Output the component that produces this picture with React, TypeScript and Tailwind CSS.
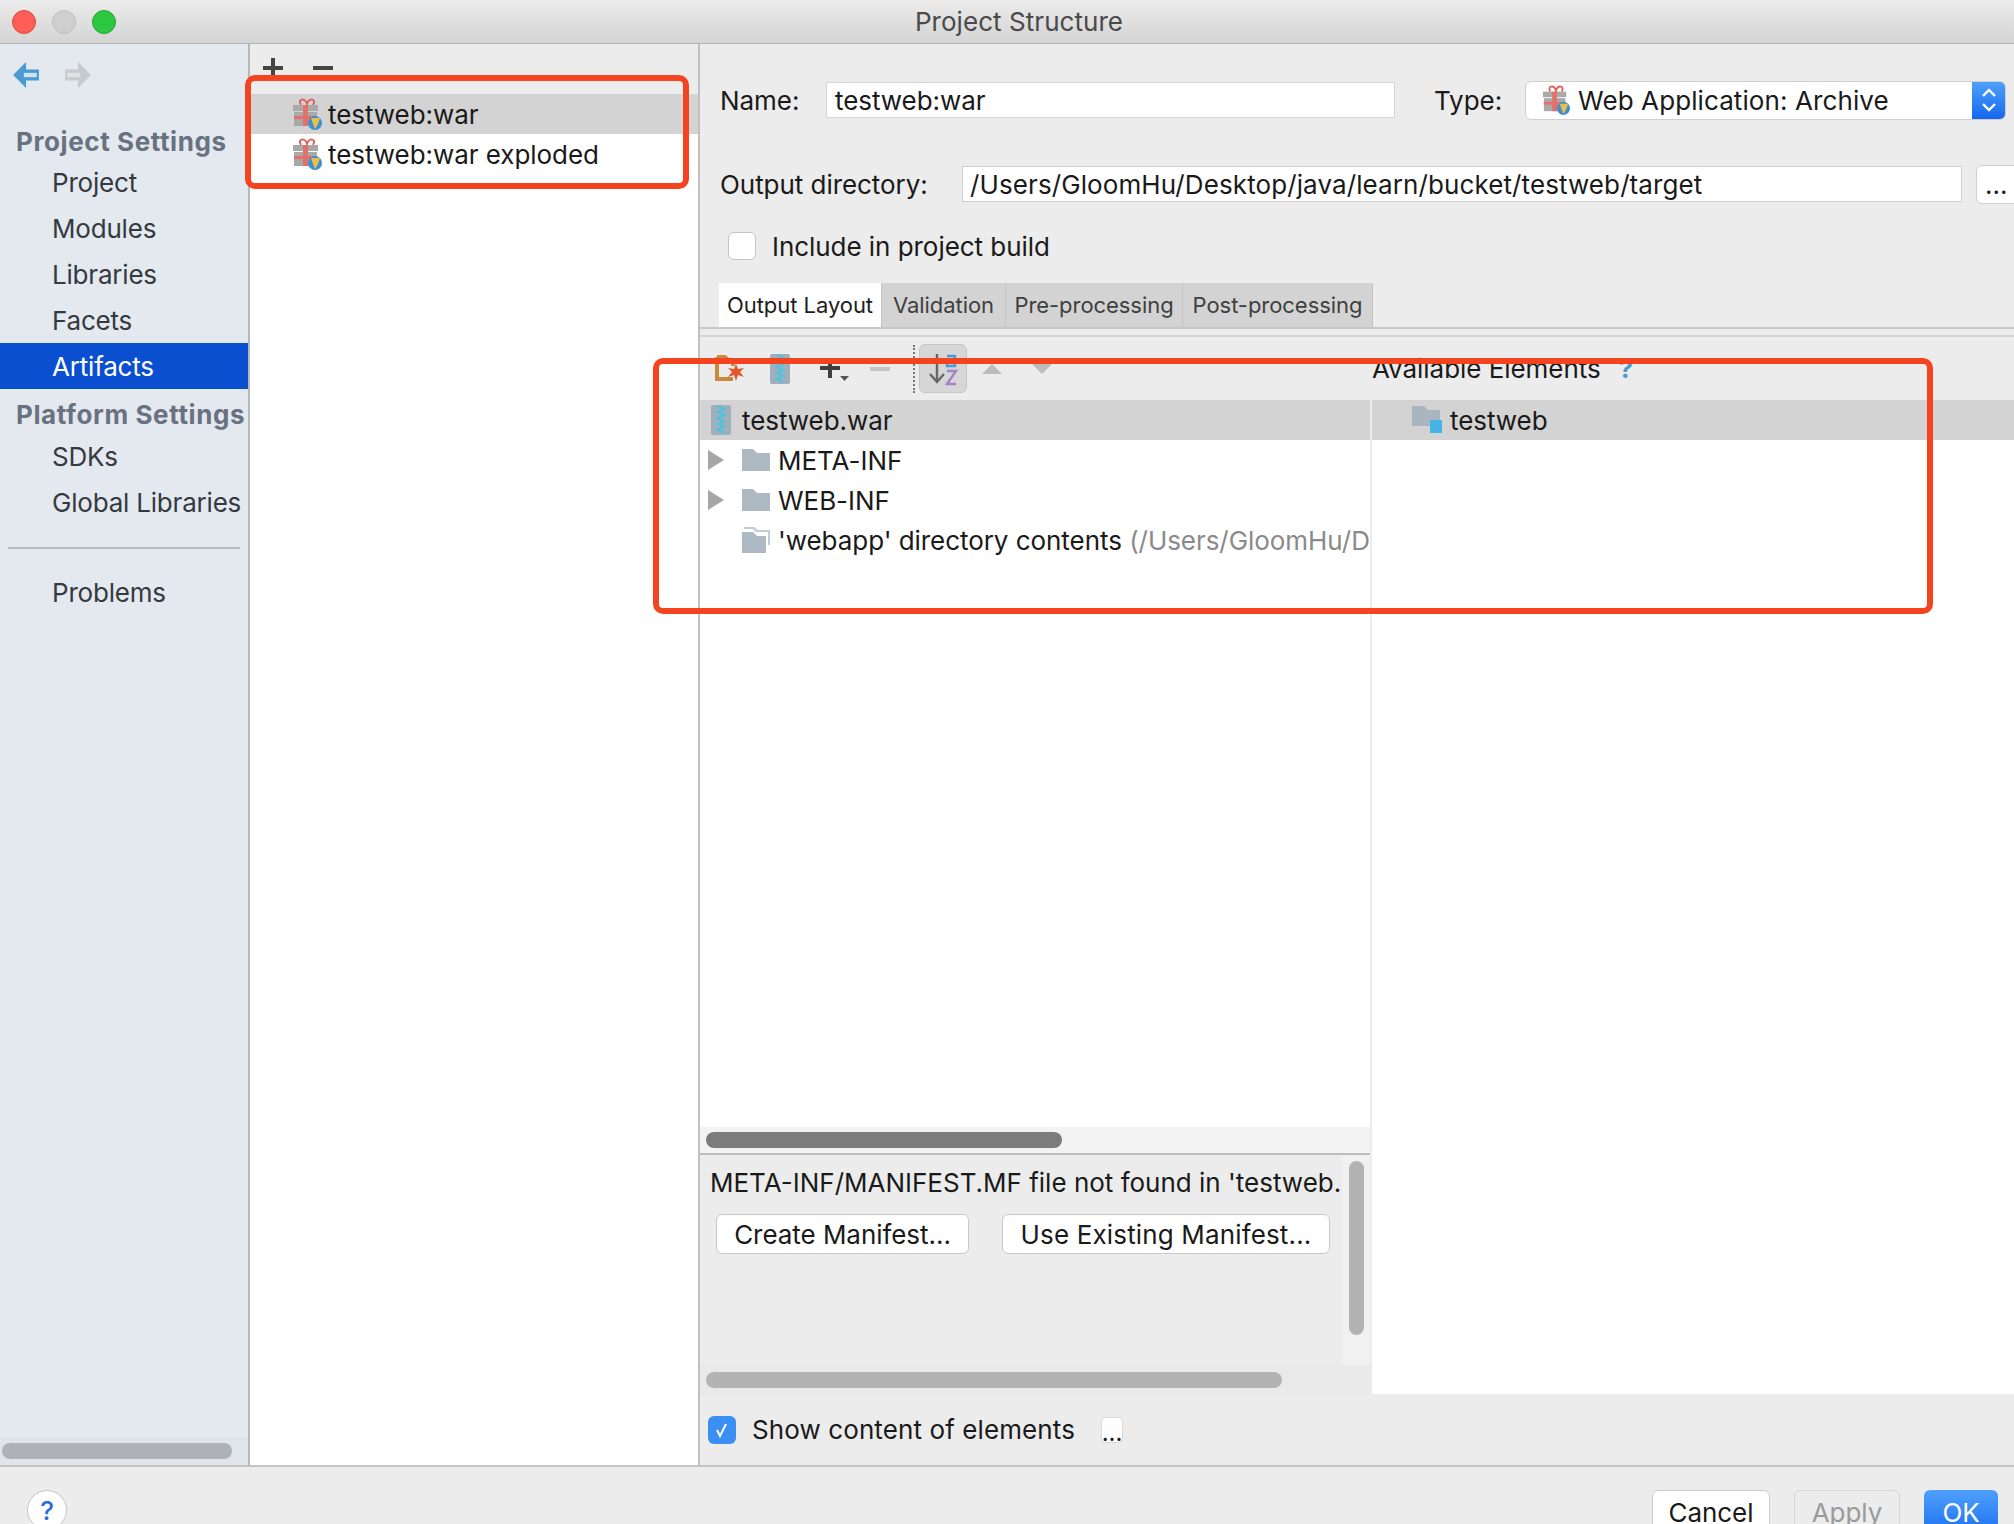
import React from "react";

const Gift = ({ className = "" }: { className?: string }) => (
  <svg viewBox="0 0 30 32" className={className}>
    <path d="M9 7c-4-6 4-8 6-1 2-7 10-5 6 1" fill="none" stroke="#e0625c" strokeWidth="2" />
    <rect x="1" y="7" width="25" height="6" fill="#a9a9a9" />
    <rect x="2" y="14" width="23" height="14" fill="#a9a9a9" />
    <rect x="11" y="7" width="5" height="21" fill="#e4706a" />
    <rect x="2" y="18" width="23" height="3" fill="#e4706a" />
    <circle cx="23" cy="25" r="7" fill="#3d8fd1" />
    <path d="M19 20h9l-2 6-3 5-2-5z" fill="#e8c048" />
  </svg>
);

const Zip = ({ className = "" }: { className?: string }) => (
  <svg viewBox="0 0 20 30" className={className}>
    <rect x="0" y="0" width="20" height="30" rx="2" fill="#9fb0bc" />
    <path d="M7 1l6 3-6 3 6 3-6 3 6 3-6 3 6 3-6 3 6 3" fill="none" stroke="#4fc3dc" strokeWidth="2.4" />
  </svg>
);

const Folder = ({ className = "" }: { className?: string }) => (
  <svg viewBox="0 0 28 22" className={className}>
    <path d="M0 0h11l4 4h13v18H0z" fill="#aebac3" />
  </svg>
);

const ContentFolder = ({ className = "" }: { className?: string }) => (
  <svg viewBox="0 0 28 26" className={className}>
    <path d="M2 0h10l4 3h12v15h-2V5H14l-3-3H2z" fill="#c3ccd3" />
    <path d="M0 5h11l4 4h9v17H0z" fill="#aebac3" />
  </svg>
);

const Arrow = () => (
  <svg viewBox="0 0 16 20" className="w-4 h-5 ml-2 shrink-0">
    <path d="M0 0l16 10L0 20z" fill="#a6a6a6" />
  </svg>
);

const Row = ({ children, cls = "" }: { children: React.ReactNode; cls?: string }) => (
  <div className={`flex items-center h-10 whitespace-nowrap overflow-hidden ${cls}`}>{children}</div>
);

const NavItem = ({ label, active = false }: { label: string; active?: boolean }) => (
  <div className={`h-[46px] pl-[52px] flex items-center whitespace-nowrap ${active ? "bg-[#0a4fd0] text-white" : "text-[#343a40]"}`}>{label}</div>
);

const Tab = ({ label, w, active = false }: { label: string; w: string; active?: boolean }) => (
  <div className={`${w} flex items-center justify-center text-[22px] tracking-[-0.05px] border-r border-[#c4c4c4] ${active ? "bg-white text-[#1d1d1d]" : "bg-[#d3d3d3] text-[#3f3f3f]"}`}>{label}</div>
);

const FootBtn = ({ label, cls }: { label: string; cls: string }) => (
  <div className={`h-[44px] flex items-center justify-center rounded-t-[6px] ${cls}`}>{label}</div>
);

export default function App() {
  return (
    <div className="relative w-[2014px] h-[1524px] overflow-hidden flex flex-col bg-[#ececec] font-['Inter',sans-serif] text-[26px] tracking-[-0.05px] text-[#1a1a1a]">
      {/* title bar */}
      <div className="h-[44px] shrink-0 flex items-center relative bg-gradient-to-b from-[#ebebeb] to-[#d4d4d4] border-b border-[#b4b4b4]">
        <div className="flex items-center gap-[16px] pl-3">
          <div className="w-6 h-6 rounded-full bg-[#fc5f57] border border-[#e0443e]" />
          <div className="w-6 h-6 rounded-full bg-[#cfcfcf] border border-[#bdbdbd]" />
          <div className="w-6 h-6 rounded-full bg-[#2bc840] border border-[#1fa92f]" />
        </div>
        <div className="flex-1 text-center text-[26px] tracking-[0.05px] text-[#4a4a4a] pr-[92px]">Project Structure</div>
      </div>

      {/* body */}
      <div className="flex-1 min-h-0 flex border-b-2 border-[#c4c4c4]">
        {/* sidebar */}
        <div className="w-[250px] shrink-0 flex flex-col bg-[#e4e9ef] border-r-2 border-[#b6b8ba] tracking-[-0.2px]">
          <div className="h-[62px] shrink-0 flex items-center pl-3 gap-[24px]">
            <svg viewBox="0 0 26 26" className="w-[28px] h-[28px]">
              <path d="M13 1L1 13l12 12v-7h12V8H13z" fill="#4a9bd4" />
              <path d="M11 11h12v4H11z" fill="#cfe3f1" />
            </svg>
            <svg viewBox="0 0 26 26" className="w-[28px] h-[28px]">
              <path d="M13 1l12 12-12 12v-7H1V8h12z" fill="#c6cacd" />
              <path d="M3 11h12v4H3z" fill="#dfe3e6" />
            </svg>
          </div>
          <div className="h-[53px] shrink-0 pl-4 pt-[17px] flex items-center font-bold text-[#687280] tracking-[0.6px] whitespace-nowrap">Project Settings</div>
          <NavItem label="Project" />
          <NavItem label="Modules" />
          <NavItem label="Libraries" />
          <NavItem label="Facets" />
          <NavItem label="Artifacts" active />
          <div className="h-[44px] shrink-0 pl-4 pt-[6px] flex items-center font-bold text-[#687280] tracking-[0.6px] whitespace-nowrap">Platform Settings</div>
          <NavItem label="SDKs" />
          <NavItem label="Global Libraries" />
          <div className="mt-[22px] mx-2 h-[2px] bg-[#b9bcc0]" />
          <div className="mt-[20px]"><NavItem label="Problems" /></div>
          <div className="flex-1" />
          <div className="h-[28px] shrink-0 flex items-center px-[2px] bg-[#e0e5eb]">
            <div className="w-[230px] h-4 rounded-full bg-[#aeb2b6]" />
          </div>
        </div>

        {/* artifact list */}
        <div className="w-[450px] shrink-0 flex flex-col bg-white border-r-2 border-[#c0c0c0]">
          <div className="h-[50px] shrink-0 bg-[#ececec] flex items-start pt-[14px] pl-[13px] gap-[30px]">
            <svg viewBox="0 0 20 20" className="w-5 h-5"><path d="M8 0h4v8h8v4h-8v8H8v-8H0V8h8z" fill="#444" /></svg>
            <svg viewBox="0 0 20 20" className="w-5 h-5"><path d="M0 8h20v4H0z" fill="#444" /></svg>
          </div>
          <div className="h-10 bg-[#d3d3d3] flex items-center pl-[42px] gap-[6px] whitespace-nowrap">
            <Gift className="w-[30px] h-[32px]" /><span>testweb:war</span>
          </div>
          <div className="h-10 flex items-center pl-[42px] gap-[6px] whitespace-nowrap">
            <Gift className="w-[30px] h-[32px]" /><span>testweb:war exploded</span>
          </div>
        </div>

        {/* details */}
        <div className="flex-1 min-w-0 flex flex-col">
          <div className="h-[36px] mt-[38px] shrink-0 flex items-center pl-[20px]">
            <span className="w-[106px] shrink-0">Name:</span>
            <div className="w-[569px] h-[36px] shrink-0 bg-white border border-[#d6d6d6] flex items-center pl-2">testweb:war</div>
            <span className="ml-[39px] w-[91px] shrink-0">Type:</span>
            <div className="w-[481px] h-[39px] shrink-0 bg-white border border-[#cfcfcf] rounded-[6px] flex items-center pl-4 gap-2 overflow-hidden">
              <Gift className="w-[28px] h-[30px]" />
              <span className="flex-1 whitespace-nowrap tracking-[0.1px]">Web Application: Archive</span>
              <div className="w-[33px] h-full bg-gradient-to-b from-[#4fa0fb] to-[#1467ee] flex items-center justify-center">
                <svg viewBox="0 0 16 28" className="w-4 h-7"><path d="M2 10l6-6 6 6M2 18l6 6 6-6" fill="none" stroke="#fff" strokeWidth="2.4" /></svg>
              </div>
            </div>
          </div>

          <div className="mt-[48px] h-[36px] shrink-0 flex items-center pl-[20px]">
            <span className="w-[242px] shrink-0 whitespace-nowrap">Output directory:</span>
            <div className="w-[1000px] h-[36px] shrink-0 bg-white border border-[#d0d0d0] flex items-center pl-[7px] whitespace-nowrap tracking-[0.1px]">/Users/GloomHu/Desktop/java/learn/bucket/testweb/target</div>
            <div className="ml-[14px] w-[60px] h-[39px] shrink-0 bg-white border border-[#d0d0d0] rounded-[6px] flex items-center pl-[8px]">...</div>
          </div>

          <div className="mt-[27px] h-[34px] shrink-0 flex items-center pl-[28px]">
            <div className="w-[28px] h-[28px] bg-white border border-[#c4c4c4] rounded-[6px]" />
            <span className="ml-4">Include in project build</span>
          </div>

          <div className="mt-[20px] h-[46px] shrink-0 flex pl-[19px] border-b-2 border-[#c8c8c8]">
            <Tab label="Output Layout" w="w-[163px]" active />
            <Tab label="Validation" w="w-[124px]" />
            <Tab label="Pre-processing" w="w-[177px]" />
            <Tab label="Post-processing" w="w-[190px]" />
          </div>

          <div className="h-[8px] shrink-0 border-b-2 border-[#d4d4d4]" />

          {/* toolbar */}
          <div className="h-[63px] shrink-0 flex items-center">
            <div className="w-[672px] shrink-0 flex items-center pl-[15px]">
              <svg viewBox="0 0 30 28" className="w-[30px] h-[28px] shrink-0">
                <path d="M2 2h8l3 3h5v6M2 2v22h16" fill="none" stroke="#c88a3c" strokeWidth="4" />
                <path d="M21 9l2 5 6-1-4 4 4 5-6-2-2 6-2-6-6 2 4-5-4-4 6 1z" fill="#e2572b" />
              </svg>
              <Zip className="w-5 h-[30px] ml-[25px] shrink-0" />
              <svg viewBox="0 0 30 26" className="w-[30px] h-[26px] ml-[30px] shrink-0">
                <path d="M8 2h4v8h8v4h-8v8H8v-8H0v-4h8z" fill="#3f3f3f" />
                <path d="M20 20h9l-4.500 5z" fill="#555" />
              </svg>
              <svg viewBox="0 0 20 4" className="w-5 h-1 ml-[20px] shrink-0"><path d="M0 0h20v4H0z" fill="#c4c4c4" /></svg>
              <div className="ml-[23px] h-[48px] border-l-2 border-dotted border-[#777]" />
              <div className="ml-1 w-[48px] h-[49px] rounded-[6px] bg-[#d6d6d6] border border-[#c6c6c6] flex items-center justify-center shrink-0">
                <svg viewBox="0 0 32 38" className="w-8 h-[38px]">
                  <path d="M10 4v28M3 24l7 8 7-8" fill="none" stroke="#666" strokeWidth="2.4" />
                  <path d="M20 6h8v10h-8v-5h8" fill="none" stroke="#4a9bd4" strokeWidth="2.4" />
                  <path d="M20 21h9l-9 13h9" fill="none" stroke="#a582c8" strokeWidth="2.4" />
                </svg>
              </div>
              <svg viewBox="0 0 20 10" className="w-5 h-[10px] ml-[15px] shrink-0"><path d="M10 0l10 10H0z" fill="#bcbcbc" /></svg>
              <svg viewBox="0 0 20 10" className="w-5 h-[10px] ml-[30px] shrink-0"><path d="M0 0h20L10 10z" fill="#bcbcbc" /></svg>
            </div>
            <div className="flex items-center whitespace-nowrap">
              <span>Available Elements</span>
              <span className="ml-[18px] text-[#4a9bd4] font-bold">?</span>
            </div>
          </div>

          {/* panes */}
          <div className="h-[994px] shrink-0 flex bg-white">
            <div className="w-[672px] shrink-0 flex flex-col border-r-2 border-[#ececec]">
              <div className="flex-1 min-h-0">
                <Row cls="bg-[#d3d3d3]">
                  <Zip className="w-5 h-[30px] ml-[11px] shrink-0" />
                  <span className="ml-[11px]">testweb.war</span>
                </Row>
                <Row>
                  <Arrow />
                  <Folder className="w-[28px] h-[22px] ml-[18px] shrink-0" />
                  <span className="ml-[8px]">META-INF</span>
                </Row>
                <Row>
                  <Arrow />
                  <Folder className="w-[28px] h-[22px] ml-[18px] shrink-0" />
                  <span className="ml-[8px]">WEB-INF</span>
                </Row>
                <Row>
                  <ContentFolder className="w-[28px] h-[26px] ml-[42px] shrink-0" />
                  <span className="ml-[8px]">'webapp' directory contents <span className="text-[#8a8a8a]">(/Users/GloomHu/Desktop/java/learn</span></span>
                </Row>
              </div>
              <div className="h-[28px] shrink-0 bg-[#f3f3f3] border-b-2 border-[#bdbdbd] flex items-center pl-[6px]">
                <div className="w-[356px] h-4 rounded-full bg-[#7c7c7c]" />
              </div>
              <div className="h-[239px] shrink-0 bg-[#ececec] flex flex-col">
                <div className="h-[210px] flex">
                  <div className="w-[642px] shrink-0 pl-[10px] pt-[8px] overflow-hidden">
                    <div className="whitespace-nowrap tracking-[0px]">META-INF/MANIFEST.MF file not found in 'testweb.</div>
                    <div className="flex mt-[12px] ml-[6px] gap-[33px]">
                      <div className="w-[253px] h-10 bg-white border border-[#c8c8c8] rounded-[6px] flex items-center justify-center">Create Manifest...</div>
                      <div className="w-[328px] h-10 bg-white border border-[#c8c8c8] rounded-[6px] flex items-center justify-center tracking-[0.15px]">Use Existing Manifest...</div>
                    </div>
                  </div>
                  <div className="flex-1 bg-[#f1f1f1] flex justify-center pt-[6px]">
                    <div className="w-[15px] h-[174px] rounded-full bg-[#b3b3b3]" />
                  </div>
                </div>
                <div className="flex-1 flex items-center pl-[6px] bg-[#e9e9e9]">
                  <div className="w-[576px] h-4 rounded-full bg-[#b3b3b3]" />
                </div>
              </div>
            </div>
            <div className="flex-1 min-w-0">
              <Row cls="bg-[#d3d3d3]">
                <svg viewBox="0 0 32 28" className="w-8 h-7 ml-[40px] shrink-0">
                  <path d="M0 0h12l4 4h12v16H0z" fill="#aab6bf" />
                  <rect x="18" y="14" width="12" height="13" fill="#46b4e6" />
                </svg>
                <span className="ml-[6px]">testweb</span>
              </Row>
            </div>
          </div>

          {/* show content */}
          <div className="flex-1 flex items-center pl-2">
            <div className="w-[28px] h-[28px] rounded-[6px] bg-[#3b8ff2] flex items-center justify-center">
              <svg viewBox="0 0 16 16" className="w-4 h-4"><path d="M3 8l3 6 6-12" fill="none" stroke="#fff" strokeWidth="2" /></svg>
            </div>
            <span className="ml-4 whitespace-nowrap tracking-[0.1px]">Show content of elements</span>
            <div className="ml-[26px] w-[22px] h-[26px] bg-white rounded-[5px] border border-[#d8d8d8] flex items-end justify-center text-[24px] leading-[18px]">...</div>
          </div>
        </div>
      </div>

      {/* footer */}
      <div className="h-[57px] shrink-0 flex items-start pt-[23px] overflow-visible">
        <div className="ml-[27px] w-[40px] h-[40px] shrink-0 rounded-full bg-white border border-[#c4c4c4] flex items-center justify-center text-[#2a6fd8] font-medium">?</div>
        <div className="flex-1" />
        <FootBtn label="Cancel" cls="w-[118px] bg-white border border-[#cccccc]" />
        <FootBtn label="Apply" cls="w-[106px] ml-[24px] bg-[#ececec] border border-[#d6d6d6] text-[#9a9a9a]" />
        <FootBtn label="OK" cls="w-[74px] ml-[24px] mr-4 bg-gradient-to-b from-[#4fa0fb] to-[#1a6ff0] text-white" />
      </div>

      {/* annotation boxes */}
      <div className="absolute left-[245px] top-[75px] w-[444px] h-[114px] border-[6px] border-[#f4431f] rounded-[10px]" />
      <div className="absolute left-[653px] top-[358px] w-[1280px] h-[256px] border-[6px] border-[#f4431f] rounded-[10px]" />
    </div>
  );
}
